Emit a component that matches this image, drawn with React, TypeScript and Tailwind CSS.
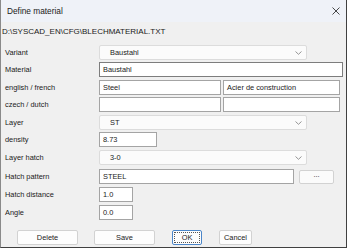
import React, { FC, ReactNode } from "react";
import clsx from "clsx";

const font = { fontFamily: '"Liberation Sans", Arial, sans-serif' };

const Chevron: FC = () => (
  <svg width="7" height="4" viewBox="0 0 7 4" className="shrink-0">
    <path d="M0.5 0.5 L3.5 3.3 L6.5 0.5" fill="none" stroke="#8a8a8a" strokeWidth="0.9" />
  </svg>
);

const Select: FC<{ value: string }> = ({ value }) => (
  <div className="flex h-full w-[208px] items-center justify-between rounded-[2px] border border-[#dcdcdc] bg-[#fbfbfb] pl-[10px] pr-[4px]">
    <span>{value}</span>
    <Chevron />
  </div>
);

const Input: FC<{ value?: string; w: string; dark?: boolean }> = ({ value, w, dark }) => (
  <div
    className={clsx(
      "flex h-full items-center bg-white pl-[3px]",
      w,
      dark ? "border border-[#7d7d7d]" : "border border-[#a4a4a4]"
    )}
  >
    {value}
  </div>
);

const Row: FC<{ label: string; mt: string; children: ReactNode }> = ({ label, mt, children }) => (
  <div className={clsx("flex h-[15px] items-center", mt)}>
    <div className="w-[98px] shrink-0 pl-[4px]">{label}</div>
    <div className="flex h-full items-center gap-[2px]">{children}</div>
  </div>
);

const Btn: FC<{ label: string; w: string; focus?: boolean }> = ({ label, w, focus }) => (
  <div
    className={clsx(
      "flex h-[15px] items-center justify-center rounded-[2px] bg-[#fdfdfd]",
      w,
      focus ? "border border-[#4b86c9] outline outline-1 -outline-offset-[3px] outline-dotted outline-[#555]" : "border border-[#d2d2d2]"
    )}
  >
    {label}
  </div>
);

export default function App() {
  return (
    <div className="h-[250px] w-[349px] bg-white text-[7.4px] leading-none text-[#1a1a1a]" style={font}>
      <div className="flex h-[248px] w-[347px] flex-col border-r border-b border-[#404040] border-l border-l-[#8a8a8a] bg-[#f0f0f0]">
        <div className="flex h-[22px] shrink-0 items-center justify-between bg-[#eff2f8] pl-[6px] pr-[6px] text-[8.3px]">
          <span>Define material</span>
          <svg width="8" height="8" viewBox="0 0 8 8">
            <path d="M0.5 0.5 L7.5 7.5 M7.5 0.5 L0.5 7.5" stroke="#333" strokeWidth="0.9" />
          </svg>
        </div>
        <div className="mt-[6px] pl-[1px] text-[8px]">D:\SYSCAD_EN\CFG\BLECHMATERIAL.TXT</div>

        <Row label="Variant" mt="mt-[9px]">
          <Select value="Baustahl" />
        </Row>
        <Row label="Material" mt="mt-[2px]">
          <Input value="Baustahl" w="w-[244px]" dark />
        </Row>
        <Row label="english / french" mt="mt-[3px]">
          <Input value="Steel" w="w-[122px]" />
          <Input value="Acier de construction" w="w-[117px]" />
        </Row>
        <Row label="czech / dutch" mt="mt-[2px]">
          <Input w="w-[122px]" />
          <Input w="w-[117px]" />
        </Row>
        <Row label="Layer" mt="mt-[3px]">
          <Select value="ST" />
        </Row>
        <Row label="density" mt="mt-[2px]">
          <Input value="8.73" w="w-[58px]" />
        </Row>
        <Row label="Layer hatch" mt="mt-[3px]">
          <Select value="3-0" />
        </Row>
        <Row label="Hatch pattern" mt="mt-[4px]">
          <Input value="STEEL" w="w-[195px]" />
          <div className="ml-[3px] flex h-[14px] w-[35px] items-center justify-center rounded-[2px] border border-[#d2d2d2] bg-[#fbfbfb] pb-[3px]">
            ...
          </div>
        </Row>
        <Row label="Hatch distance" mt="mt-[3px]">
          <Input value="1.0" w="w-[34px]" />
        </Row>
        <Row label="Angle" mt="mt-[3px]">
          <Input value="0.0" w="w-[34px]" />
        </Row>

        <div className="mt-[10px] flex items-center pl-[16px]">
          <Btn label="Delete" w="w-[61px]" />
          <div className="ml-[16px]">
            <Btn label="Save" w="w-[61px]" />
          </div>
          <div className="ml-[17px]">
            <Btn label="OK" w="w-[30px]" focus />
          </div>
          <div className="ml-[17px]">
            <Btn label="Cancel" w="w-[33px]" />
          </div>
        </div>
      </div>
    </div>
  );
}
